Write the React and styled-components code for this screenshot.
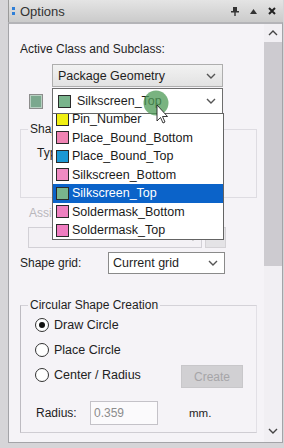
import styled, { createGlobalStyle } from "styled-components";

const Global = createGlobalStyle`
  html, body { margin: 0; padding: 0; }
  body {
    width: 284px;
    height: 448px;
    overflow: hidden;
    font-family: "Liberation Sans", Arial, sans-serif;
    font-size: 12px;
    color: #1e1e1e;
  }
`;

const LAYERS = [
  { name: "Pin_Number", color: "#f0ef12" },
  { name: "Place_Bound_Bottom", color: "#ef83b3" },
  { name: "Place_Bound_Top", color: "#1b98d4" },
  { name: "Silkscreen_Bottom", color: "#f08bc2" },
  { name: "Silkscreen_Top", color: "#79b48c", selected: true },
  { name: "Soldermask_Bottom", color: "#ee80c0" },
  { name: "Soldermask_Top", color: "#f07dc1" },
];

function Chevron({ up, color = "#555" }) {
  return (
    <svg width="10" height="6" viewBox="0 0 10 6">
      <polyline
        points={up ? "1,5 5,1 9,5" : "1,1 5,5 9,1"}
        fill="none"
        stroke={color}
        strokeWidth="1.4"
      />
    </svg>
  );
}

function App() {
  return (
    <>
      <Global />
      <Window>
        <TitleBar>
          <Grip>
            <i />
            <i />
          </Grip>
          <Title>Options</Title>
          <TitleTools>
            <svg width="8" height="9" viewBox="0 0 8 9">
              <rect x="2" y="0" width="4" height="4" fill="#333" />
              <rect x="0" y="4" width="8" height="1.5" fill="#333" />
              <rect x="3.3" y="5" width="1.4" height="4" fill="#333" />
            </svg>
            <svg width="7" height="5" viewBox="0 0 7 5">
              <polygon points="0,5 3.5,0 7,5" fill="#333" />
            </svg>
            <svg width="8" height="8" viewBox="0 0 8 8">
              <path d="M1 1 L7 7 M7 1 L1 7" stroke="#222" strokeWidth="2" />
            </svg>
          </TitleTools>
        </TitleBar>

        <Frame>
          <Content>
            <Heading>Active Class and Subclass:</Heading>
            <ClassCombo>
              <span>Package Geometry</span>
              <Chevron />
            </ClassCombo>

            <SubRow>
              <OuterSwatch />
              <SubComboWrap>
                <SubCombo>
                  <Swatch $color="#79b48c" />
                  <span>Silkscreen_Top</span>
                  <Chevron />
                </SubCombo>
                <DropList>
                  <ListScroll>
                    {LAYERS.map((l) => (
                      <ListItem key={l.name} $selected={l.selected}>
                        <Swatch $color={l.color} />
                        {l.name}
                      </ListItem>
                    ))}
                  </ListScroll>
                </DropList>
                <Cursor width="30" height="36" viewBox="0 0 30 36">
                  <circle cx="13" cy="13" r="12.5" fill="#4c9a55" fillOpacity="0.75" />
                  <path
                    d="M14 15 L14 31 L17.5 27.5 L20 33 L22 32 L19.5 26.5 L24.5 26.5 Z"
                    fill="#fff"
                    stroke="#222"
                    strokeWidth="0.9"
                  />
                </Cursor>
              </SubComboWrap>
            </SubRow>

            <ShapeFill>
              <Legend>Shape Fill</Legend>
              <TypeLabel>Type:</TypeLabel>
            </ShapeFill>

            <DimLabel>Assign net name</DimLabel>
            <NetRow>
              <NetCombo>
                <Chevron color="#b0b0b0" />
              </NetCombo>
              <DotsButton>...</DotsButton>
            </NetRow>

            <GridRow>
              <Label>Shape grid:</Label>
              <GridCombo>
                <span>Current grid</span>
                <Chevron />
              </GridCombo>
            </GridRow>

            <CircleGroup>
              <Legend>Circular Shape Creation</Legend>
              <RadioRow>
                <Radio $checked />
                Draw Circle
              </RadioRow>
              <RadioRow>
                <Radio />
                Place Circle
              </RadioRow>
              <RadioRow>
                <Radio />
                Center / Radius
                <CreateButton>Create</CreateButton>
              </RadioRow>
              <RadiusRow>
                <RadiusLabel>Radius:</RadiusLabel>
                <RadiusInput>0.359</RadiusInput>
                <Unit>mm.</Unit>
              </RadiusRow>
            </CircleGroup>
          </Content>

          <ScrollBar>
            <ScrollArrow>
              <Chevron up color="#444" />
            </ScrollArrow>
            <Thumb />
            <Track />
            <ScrollArrow>
              <Chevron color="#444" />
            </ScrollArrow>
          </ScrollBar>
        </Frame>
      </Window>
    </>
  );
}

const Window = styled.div`
  width: 284px;
  height: 448px;
  box-sizing: border-box;
  display: flex;
  flex-direction: column;
  background: #d6d5d8;
  padding: 0 1px 5px 8px;
`;

const TitleBar = styled.div`
  height: 22px;
  flex: none;
  display: flex;
  align-items: center;
  background: linear-gradient(#e4e4e4, #cbcbcb);
  border-left: 1px solid #9a9a9a;
  padding-left: 3px;
`;

const Grip = styled.div`
  display: flex;
  flex-direction: column;
  gap: 2px;
  margin-right: 5px;

  i {
    width: 3px;
    height: 3px;
    background: #2f7fd8;
  }
`;

const Title = styled.div`
  font-size: 13px;
  color: #333;
  flex: 1;
`;

const TitleTools = styled.div`
  display: flex;
  align-items: center;
  gap: 11px;
  padding-right: 7px;
`;

const Frame = styled.div`
  flex: 1;
  display: flex;
  background: #f5f3f7;
  border: 1px solid #a4a4a8;
  border-top: 2px solid #b4b4b8;
  min-height: 0;
`;

const Content = styled.div`
  flex: 1;
  padding-left: 11px;
  display: flex;
  flex-direction: column;
  align-items: flex-start;
`;

const Heading = styled.div`
  line-height: 14px;
  margin-top: 18px;
`;

const ComboBase = styled.div`
  box-sizing: border-box;
  display: flex;
  align-items: center;
  gap: 4px;
  padding: 0 6px 0 5px;
  font-size: 12.5px;

  span {
    flex: 1;
  }
`;

const ClassCombo = styled(ComboBase)`
  margin: 8px 0 0 32px;
  width: 171px;
  height: 23px;
  background: linear-gradient(#f2f2f2, #e2e2e2);
  border: 1px solid #aeaeae;
`;

const SubRow = styled.div`
  display: flex;
  align-items: center;
  margin-top: 1px;
  height: 26px;
`;

const OuterSwatch = styled.div`
  width: 14px;
  height: 15px;
  box-sizing: border-box;
  margin: 0 9px 0 9px;
  background: #7ba88e;
  border: 1px solid #8c8c8c;
  box-shadow: inset 0 0 0 1px #b8d0c2;
`;

const SubComboWrap = styled.div`
  position: relative;
`;

const SubCombo = styled(ComboBase)`
  width: 171px;
  height: 26px;
  background: #fff;
  border: 1px solid #6e6e6e;
  gap: 6px;
`;

const Swatch = styled.i`
  flex: none;
  width: 13px;
  height: 13px;
  box-sizing: border-box;
  background: ${(p) => p.$color};
  border: 1px solid #2a2a2a;
`;

const DropList = styled.div`
  position: absolute;
  z-index: 2;
  left: 0;
  top: 25px;
  width: 172px;
  height: 127px;
  box-sizing: border-box;
  background: #fff;
  border: 1px solid #646464;
  overflow: hidden;
`;

const ListScroll = styled.div`
  margin-top: -4px;
`;

const ListItem = styled.div`
  height: 18.5px;
  display: flex;
  align-items: center;
  gap: 3px;
  padding-left: 3px;
  font-size: 12.5px;
  background: ${(p) => (p.$selected ? "#0b63c9" : "transparent")};
  color: ${(p) => (p.$selected ? "#fff" : "#1a1a1a")};
`;

const Cursor = styled.svg`
  position: absolute;
  z-index: 3;
  left: 91px;
  top: 2px;
`;

const Legend = styled.legend`
  padding: 0 2px;
  line-height: 14px;
  font-size: 12px;
`;

const Group = styled.fieldset`
  box-sizing: border-box;
  margin: 0;
  width: 237px;
  padding: 0 7px;
  border: 1px solid #dedce2;
  display: flex;
  flex-direction: column;
  align-items: flex-start;
`;

const ShapeFill = styled(Group)`
  margin-top: 8px;
  height: 76px;
`;

const TypeLabel = styled.div`
  margin: 10px 0 0 9px;
  line-height: 14px;
`;

const DimLabel = styled.div`
  margin: 8px 0 0 9px;
  line-height: 14px;
  color: #b9b7bc;
`;

const NetRow = styled.div`
  display: flex;
  gap: 3px;
  margin: 7px 0 0 8px;
`;

const NetCombo = styled.div`
  width: 174px;
  height: 21px;
  box-sizing: border-box;
  border: 1px solid #d2d0d6;
  background: #f3f1f5;
  display: flex;
  align-items: center;
  justify-content: flex-end;
  padding-right: 3px;
`;

const DotsButton = styled.div`
  width: 21px;
  height: 21px;
  box-sizing: border-box;
  border: 1px solid #d4d2d6;
  background: #e4e3e6;
  color: #aaa;
  font-size: 10px;
  text-align: center;
  line-height: 14px;
`;

const GridRow = styled.div`
  display: flex;
  align-items: center;
  margin-top: 4px;
`;

const Label = styled.div`
  width: 88px;
  line-height: 14px;
`;

const GridCombo = styled(ComboBase)`
  width: 117px;
  height: 22px;
  background: #fff;
  border: 1px solid #8a8a8a;
  padding-left: 4px;
`;

const CircleGroup = styled(Group)`
  margin-top: 24px;
  height: 135px;
  border-color: #d4d2d8 #e2e0e6 #cfcdd3 #bdbbc1;
`;

const RadioRow = styled.div`
  align-self: stretch;
  display: flex;
  align-items: center;
  height: 24px;
  margin-top: 1px;
  padding-left: 7px;
  font-size: 12.5px;
  color: #222;

  &:first-of-type {
    margin-top: 1px;
  }
`;

const Radio = styled.i`
  width: 14px;
  height: 14px;
  box-sizing: border-box;
  border-radius: 50%;
  border: 1px solid #333;
  background: #fff;
  margin-right: 5px;
  display: flex;
  align-items: center;
  justify-content: center;

  &::after {
    content: "";
    width: 6px;
    height: 6px;
    border-radius: 50%;
    background: ${(p) => (p.$checked ? "#111" : "transparent")};
  }
`;

const CreateButton = styled.div`
  margin: 3px 6px 0 auto;
  width: 62px;
  height: 23px;
  box-sizing: border-box;
  background: #d1d0d3;
  border: 1px solid #c8c7ca;
  color: #a6a5a8;
  display: flex;
  align-items: center;
  justify-content: center;
  font-size: 12px;
`;

const RadiusRow = styled.div`
  display: flex;
  align-items: center;
  height: 24px;
  margin-top: 14px;
  padding-left: 8px;
`;

const RadiusLabel = styled.div`
  width: 54px;
`;

const RadiusInput = styled.div`
  width: 68px;
  height: 24px;
  box-sizing: border-box;
  border: 1px solid #c4c2c8;
  background: #fbfafc;
  color: #8c8c8c;
  padding-left: 3px;
  display: flex;
  align-items: center;
`;

const Unit = styled.div`
  margin-left: 31px;
  font-size: 11.5px;
`;

const ScrollBar = styled.div`
  width: 18px;
  flex: none;
  display: flex;
  flex-direction: column;
  background: #f1eff3;
`;

const ScrollArrow = styled.div`
  height: 18px;
  display: flex;
  align-items: center;
  justify-content: center;

  &:last-child {
    height: 20px;
    margin-bottom: 1px;
  }
`;

const Thumb = styled.div`
  height: 224px;
  background: #cdcbd0;
`;

const Track = styled.div`
  flex: 1;
`;

export default App;
